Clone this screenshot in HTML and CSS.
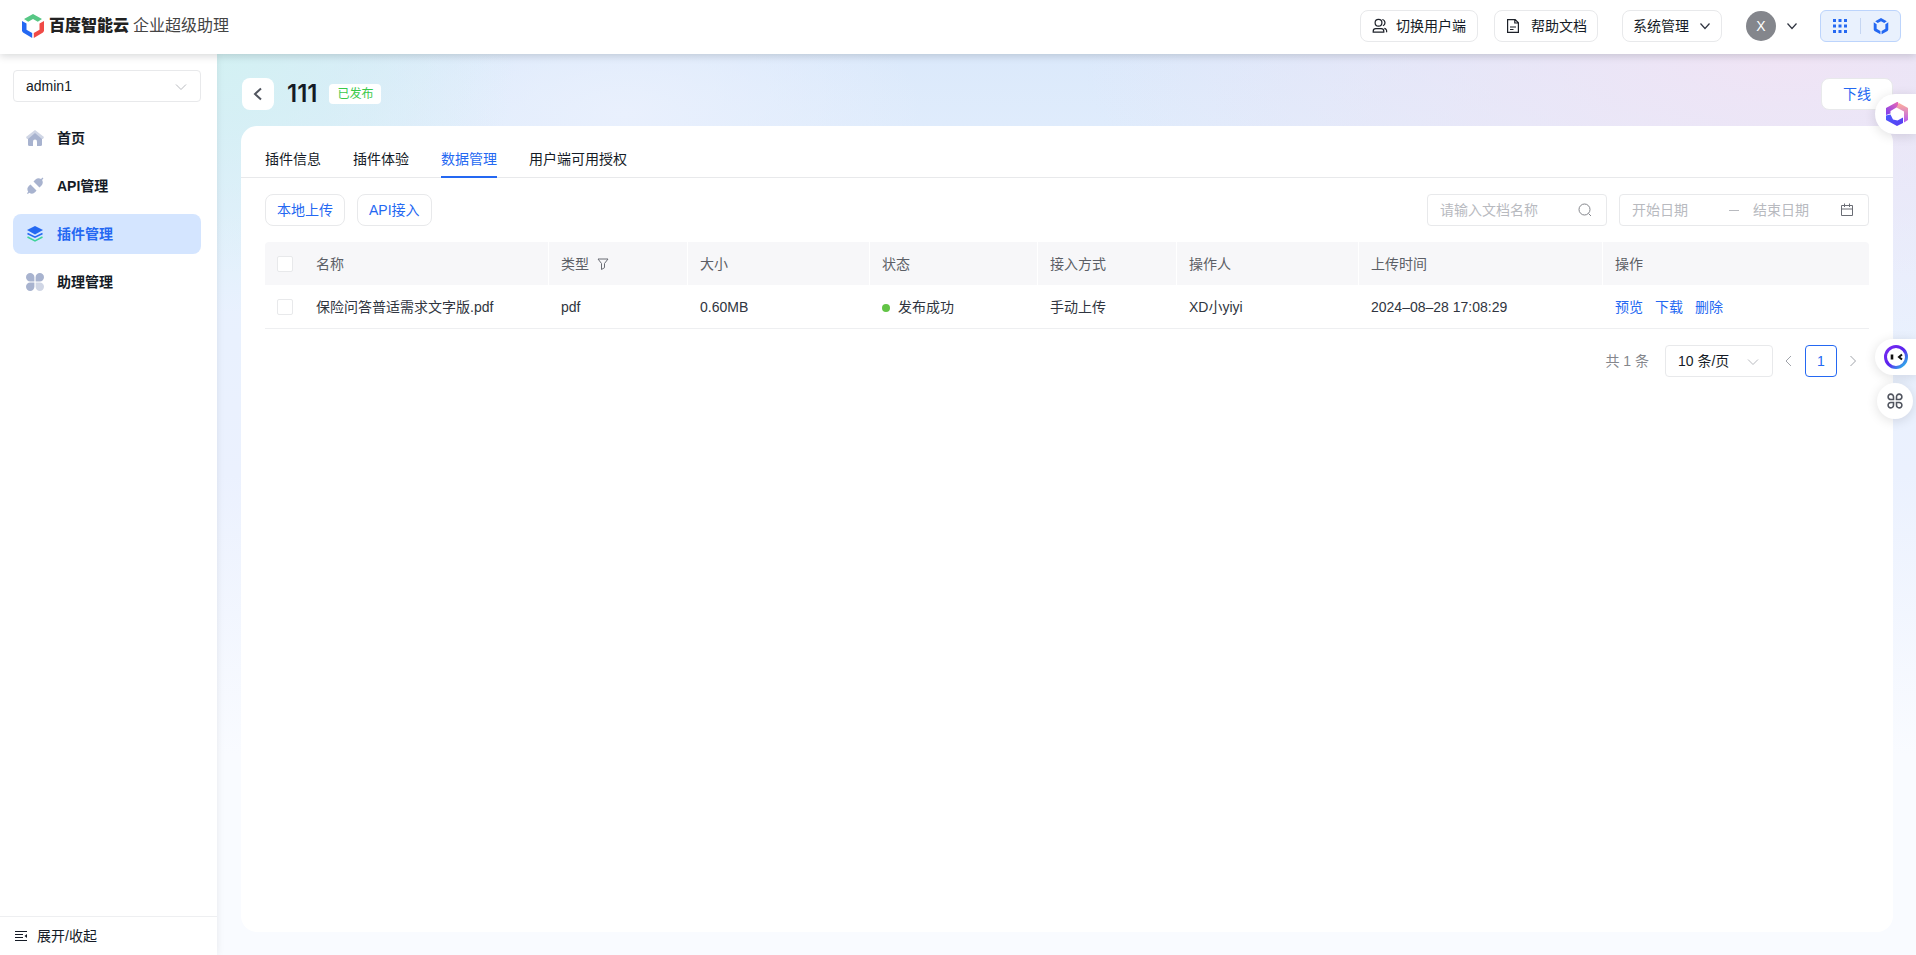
FILE: index.html
```html
<!DOCTYPE html>
<html lang="zh-CN">
<head>
<meta charset="utf-8">
<title>企业超级助理</title>
<link rel="stylesheet" href="styles.css">
</head>
<body>
<div class="app">
  <header class="topbar">
    <a class="brand" href="#">
      <svg class="brand-logo" width="22" height="24" viewBox="0 0 22 24" aria-hidden="true">
        <path fill="#57c785" d="M11 0 20 5 15.800 7.800 11 5 6.200 7.800 2 5z"/>
        <path fill="#2468f2" d="M0 7l4.500 2.600v6.200L10.200 19v5L1 18.600 0 17z"/>
        <path fill="#f04a47" d="M22 7l-4.500 2.600v6.200L11.800 19v5L21 18.600l1-1.600z"/>
      </svg>
      <span class="brand-name">百度智能云</span>
      <span class="brand-product">企业超级助理</span>
    </a>
    <div class="top-actions">
      <button class="top-btn switch" type="button">
        <svg width="16" height="16" viewBox="0 0 16 16" fill="none" stroke="#1d2129" stroke-width="1.2" aria-hidden="true"><circle cx="6.500" cy="4.800" r="3.400"/><path d="M1.200 14.200v-1a2.600 2.600 0 0 1 2.600-2.600h5.400a2.600 2.600 0 0 1 2.600 2.600v1zM10.300 1.500a3.300 3.300 0 0 1 .6 6.300M12.300 10.300a3 3 0 0 1 2.200 4"/></svg>
        <span>切换用户端</span>
      </button>
      <button class="top-btn help" type="button">
        <svg width="16" height="16" viewBox="0 0 16 16" fill="none" stroke="#1d2129" stroke-width="1.200" aria-hidden="true"><path d="M2.600 1.600h7.600l3.200 3.200v9.600H2.600zM9.800 1.800v3.200h3.400M5 9h6M5 11.500h3.500"/></svg>
        <span>帮助文档</span>
      </button>
      <button class="top-btn system" type="button">
        <span>系统管理</span>
        <svg width="12" height="12" viewBox="0 0 12 12" fill="none" stroke="#303540" stroke-width="1.200" aria-hidden="true"><path d="M1.500 3.500 6 8.500l4.500-5"/></svg>
      </button>
      <button class="user" type="button" aria-label="用户">
        <span class="avatar">X</span>
        <svg width="12" height="12" viewBox="0 0 12 12" fill="none" stroke="#303540" stroke-width="1.200" aria-hidden="true"><path d="M1.500 3.500 6 8.500l4.500-5"/></svg>
      </button>
      <div class="apps">
        <button type="button" aria-label="应用">
          <svg width="16" height="16" viewBox="0 0 16 16" fill="#2468f2" aria-hidden="true"><path d="M1 1h3v3H1zM6.500 1h3v3h-3zM12 1h3v3h-3zM1 6.500h3v3H1zM6.500 6.500h3v3h-3zM12 6.500h3v3h-3zM1 12h3v3H1zM6.500 12h3v3h-3zM12 12h3v3h-3z"/></svg>
        </button>
        <span class="apps-line"></span>
        <button type="button" aria-label="云服务">
          <svg width="16" height="18" viewBox="0 0 22 24" fill="#2468f2" aria-hidden="true"><path d="M11 1 19 5.400 15.500 8 11 5.400 6.500 8 3 5.400zM1 7l4 2.600v6.200L10.200 19v4.500L2 18.800 1 17zM21 7l-4 2.600v6.200L11.800 19v4.500L20 18.800l1-1.800z"/></svg>
        </button>
      </div>
    </div>
  </header>

  <div class="body">
    <aside class="sidebar">
      <div class="select-wrap account">
        <select aria-label="账号"><option>admin1</option></select>
        <svg class="caret" width="12" height="12" viewBox="0 0 12 12" fill="none" stroke="#b8babf" aria-hidden="true"><path d="M1 3.500 6 8.500l5-5"/></svg>
      </div>
      <nav class="menu">
        <a href="#"><svg width="18" height="18" viewBox="0 0 18 18" aria-hidden="true"><path fill="#d0d6e5" d="M9 1l9 7-1 2H1L0 8z"/><path fill="#a8b3cf" d="M9 4l7 6v5.500a1.500 1.500 0 0 1-1.500 1.500h-11A1.500 1.500 0 0 1 2 15.500V10z"/><path fill="#fff" d="M7 17v-4.500a2 2 0 0 1 4 0V17z"/></svg><span>首页</span></a>
        <a href="#"><svg width="18" height="18" viewBox="0 0 18 18" fill="#a8b3cf" aria-hidden="true"><path d="M4.500 7.500l6 6-1.200 1.500a4.800 4.800 0 0 1-6 .8L1.800 17l-.8-.8 1.200-1.500a4.800 4.800 0 0 1 .8-6z"/><path d="M7.500 4.500 9.500 2.500a4.800 4.800 0 0 1 5.500-.6L16.600.6l.8.8-1.300 1.600a4.800 4.800 0 0 1-.6 5.500l-2 2z"/></svg><span>API管理</span></a>
        <a class="active" href="#" aria-current="page"><svg width="18" height="18" viewBox="0 0 18 18" fill="none" aria-hidden="true"><path fill="#2468f2" d="M9 1l8 4-8 4.500L1 5z"/><path stroke="#2468f2" stroke-width="1.500" d="M1.500 8.500 9 12.200l7.500-3.700"/><path stroke="#3ed49a" stroke-width="1.500" d="M1.500 12 9 15.800l7.500-3.800"/></svg><span>插件管理</span></a>
        <a href="#"><svg width="18" height="18" viewBox="0 0 18 18" fill="#a8b3cf" aria-hidden="true"><path d="M4.200 0A4.200 4.200 0 0 1 8.400 4.200v4.200H4.200A4.200 4.200 0 0 1 4.200 0zM13.800 0a4.200 4.200 0 0 1 0 8.400H9.600V4.200A4.200 4.200 0 0 1 13.800 0zM4.200 18a4.200 4.200 0 0 1 0-8.400h4.200v4.200A4.200 4.200 0 0 1 4.200 18z"/><path fill="#d0d6e5" d="M13.800 18a4.200 4.200 0 0 1-4.200-4.200V9.600h4.200a4.200 4.200 0 0 1 0 8.400z"/></svg><span>助理管理</span></a>
      </nav>
      <button class="collapse" type="button">
        <svg width="12" height="12" viewBox="0 0 12 12" aria-hidden="true"><path stroke="#151b26" stroke-width="1.200" d="M0 1.500h12M0 4.500h8M0 7.500h8M0 10.500h12"/><path fill="#151b26" d="M12 4v4L9.500 6z"/></svg>
        <span>展开/收起</span>
      </button>
    </aside>

    <main class="main">
      <div class="page-head">
        <button class="back" type="button" aria-label="返回"><svg width="16" height="16" viewBox="0 0 16 16" fill="none" stroke="#51555f" stroke-width="2" aria-hidden="true"><path d="M11 2.500 5 8l6 5.500"/></svg></button>
        <h1>111</h1>
        <span class="tag">已发布</span>
        <button class="offline" type="button">下线</button>
      </div>

      <section class="card">
        <nav class="tabs">
          <a href="#">插件信息</a>
          <a href="#">插件体验</a>
          <a class="active" href="#" aria-current="page">数据管理</a>
          <a href="#">用户端可用授权</a>
        </nav>
        <div class="content">
          <div class="toolbar">
            <button class="line-btn" type="button">本地上传</button>
            <button class="line-btn" type="button">API接入</button>
            <label class="field search">
              <input type="text" placeholder="请输入文档名称" aria-label="请输入文档名称">
              <svg width="14" height="14" viewBox="0 0 14 14" fill="none" stroke="#84868c" aria-hidden="true"><circle cx="6.500" cy="6.500" r="5.500"/><path d="M10.500 10.500 13 13"/></svg>
            </label>
            <div class="field range">
              <input type="text" placeholder="开始日期" aria-label="开始日期">
              <span class="dash"></span>
              <input type="text" placeholder="结束日期" aria-label="结束日期">
              <svg width="14" height="14" viewBox="0 0 14 14" fill="none" stroke="#6a6d75" aria-hidden="true"><path d="M1.500 2.500h11v10h-11zM1.500 6h11M4.500.5v3.500M9.500.5v3.500"/></svg>
            </div>
          </div>

          <table class="grid">
            <colgroup><col class="c-check"><col class="c-name"><col class="c-type"><col class="c-size"><col class="c-state"><col class="c-type"><col class="c-size"><col class="c-time"><col></colgroup>
            <thead>
              <tr>
                <th class="check"><input type="checkbox" aria-label="全选"></th>
                <th>名称</th>
                <th>类型<svg class="filter" width="12" height="12" viewBox="0 0 12 12" fill="none" stroke="#6a6d75" aria-hidden="true"><path d="M1 1h10L7.500 5.500v4.200l-3 1.800v-6z"/></svg></th>
                <th>大小</th><th>状态</th><th>接入方式</th><th>操作人</th><th>上传时间</th><th>操作</th>
              </tr>
            </thead>
            <tbody>
              <tr>
                <td class="check"><input type="checkbox" aria-label="选择 保险问答普适需求文字版.pdf"></td>
                <td>保险问答普适需求文字版.pdf</td>
                <td>pdf</td>
                <td>0.60MB</td>
                <td><span class="dot"></span>发布成功</td>
                <td>手动上传</td>
                <td>XD小yiyi</td>
                <td>2024–08–28 17:08:29</td>
                <td><div class="ops"><a href="#">预览</a><a href="#">下载</a><a href="#">删除</a></div></td>
              </tr>
            </tbody>
          </table>

          <div class="pager">
            <span class="total">共 1 条</span>
            <div class="select-wrap size">
              <select aria-label="每页条数"><option>10 条/页</option></select>
              <svg class="caret" width="12" height="12" viewBox="0 0 12 12" fill="none" stroke="#b8babf" aria-hidden="true"><path d="M1 3.500 6 8.500l5-5"/></svg>
            </div>
            <button class="arrow" type="button" aria-label="上一页"><svg width="12" height="12" viewBox="0 0 12 12" fill="none" stroke="#a0a3aa" aria-hidden="true"><path d="M8 1 3 6l5 5"/></svg></button>
            <button class="page" type="button" aria-current="page">1</button>
            <button class="arrow" type="button" aria-label="下一页"><svg width="12" height="12" viewBox="0 0 12 12" fill="none" stroke="#a0a3aa" aria-hidden="true"><path d="M3.500 1l5 5-5 5"/></svg></button>
          </div>
        </div>
      </section>
    </main>
  </div>

  <button class="float float-cloud" type="button" aria-label="智能云">
    <svg width="22" height="24" viewBox="0 0 22 24" aria-hidden="true">
      <defs>
        <linearGradient id="g1" x1="0" y1="1" x2="1" y2="0"><stop offset="0" stop-color="#7a3cf0"/><stop offset="1" stop-color="#f06bb0"/></linearGradient>
        <linearGradient id="g2" x1="0" y1="0" x2="0" y2="1"><stop offset="0" stop-color="#ffb09a"/><stop offset="1" stop-color="#b65cf0"/></linearGradient>
        <linearGradient id="g3" x1="0" y1="0" x2="1" y2="1"><stop offset="0" stop-color="#4a5cff"/><stop offset="1" stop-color="#5a3cf0"/></linearGradient>
      </defs>
      <path fill="url(#g1)" d="M11 0 0 6v7l4.500-1.500V9L13 4l-1-4z"/>
      <path fill="url(#g2)" d="M13 1l9 5v12l-4 2.500V9.500L10.500 5.500z"/>
      <path fill="url(#g3)" d="M0 13.500 4.500 12.500 7 17.500l4.500 1 5.500-3v5.500L11 24 0 18z"/>
    </svg>
  </button>
  <button class="float float-bot" type="button" aria-label="智能客服">
    <svg width="24" height="24" viewBox="0 0 24 24" aria-hidden="true">
      <defs><linearGradient id="g4" x1="0" y1="0" x2="1" y2="1"><stop offset="0" stop-color="#7a2cf0"/><stop offset=".5" stop-color="#5a22ee"/><stop offset="1" stop-color="#25c8e8"/></linearGradient></defs>
      <circle cx="12" cy="12" r="10.500" fill="none" stroke="url(#g4)" stroke-width="3"/>
      <path fill="none" stroke="#111" stroke-width="2.600" d="M8 9.500v5"/><path fill="none" stroke="#111" stroke-width="2" d="M18 9.500 15 12l3 2.500"/>
    </svg>
  </button>
  <button class="float float-more" type="button" aria-label="更多">
    <svg width="16" height="16" viewBox="0 0 16 16" fill="none" stroke="#51555f" stroke-width="1.600" aria-hidden="true"><path d="M6.500 6.500H4A2.700 2.700 0 1 1 6.500 4zM9.500 6.500V4A2.700 2.700 0 1 1 12 6.500zM6.500 9.500V12A2.700 2.700 0 1 1 4 9.500zM9.500 9.500H12A2.700 2.700 0 1 1 9.500 12z"/></svg>
  </button>
</div>
</body>
</html>
```
FILE: styles.css
```css
* { box-sizing: border-box; }
body {
  margin: 0;
  color: #151b26;
  font: 14px/20px "Liberation Sans", "Noto Sans CJK SC", sans-serif;
}
a { color: inherit; text-decoration: none; }
button, input, select { font: inherit; color: inherit; }
button { padding: 0; border: 0; background: none; cursor: pointer; }
svg { display: block; flex: none; }

.app { position: relative; display: flex; flex-direction: column; height: 100vh; overflow: hidden; }

.topbar {
  position: relative;
  z-index: 2;
  display: flex;
  align-items: center;
  justify-content: space-between;
  height: 54px;
  padding: 0 15px 2px 22px;
  background: #fff;
  box-shadow: 0 2px 8px rgba(7, 12, 20, .16);
}
.brand { display: flex; align-items: center; }
.brand-name { margin-left: 5px; font-size: 16px; font-weight: 900; color: #222; }
.brand-product { margin-left: 4px; font-size: 16px; color: #444; }
.top-actions { display: flex; align-items: center; }
.top-btn {
  display: flex;
  align-items: center;
  gap: 8px;
  height: 32px;
  padding: 0 11px;
  border: 1px solid #e8e9eb;
  border-radius: 8px;
}
.help { margin-left: 16px; padding: 0 10px; gap: 10px; }
.system { margin-left: 24px; padding: 0 10px; gap: 10px; }
.user { display: flex; align-items: center; gap: 10px; margin: 0 22px 0 24px; }
.avatar {
  width: 30px;
  height: 30px;
  border-radius: 50%;
  background: #84868c;
  color: #fff;
  line-height: 30px;
  text-align: center;
}
.apps {
  display: flex;
  align-items: center;
  gap: 12px;
  height: 32px;
  padding: 0 11px;
  border: 1px solid #bcd4fc;
  border-radius: 6px;
  background: #e9f1fd;
}
.apps-line { width: 1px; height: 16px; background: #c5d6f2; }

.body { display: flex; flex: 1; min-height: 0; }
.sidebar {
  z-index: 1;
  display: flex;
  flex-direction: column;
  flex: none;
  width: 217px;
  background: #fff;
  box-shadow: 0 0 8px rgba(7, 12, 20, .08);
}
.select-wrap { position: relative; display: flex; height: 32px; }
.select-wrap select {
  width: 100%;
  padding: 0 28px 0 12px;
  border: 1px solid #e8e9eb;
  border-radius: 4px;
  background: #fff;
  appearance: none;
}
.caret { position: absolute; top: 11px; right: 14px; pointer-events: none; }
.account { margin: 16px 16px 0 13px; }
.menu { display: flex; flex: 1; flex-direction: column; gap: 8px; margin: 16px 16px 0 13px; }
.menu a {
  display: flex;
  align-items: center;
  gap: 13px;
  height: 40px;
  padding: 0 13px;
  border-radius: 8px;
  font-weight: 600;
}
.menu .active { background: #d4e5ff; color: #2468f2; }
.collapse {
  display: flex;
  align-items: center;
  gap: 10px;
  height: 39px;
  padding: 0 15px;
  border-top: 1px solid #eeeff1;
}

.main {
  display: flex;
  flex: 1;
  flex-direction: column;
  min-width: 0;
  padding: 24px 23px 23px 24px;
  background:
    radial-gradient(ellipse 300px 260px at 0 0, #d3f1f3, rgba(211, 241, 243, 0)),
    radial-gradient(ellipse 300px 140px at 24% 60px, #e9f0fd, rgba(233, 240, 253, 0)),
    radial-gradient(ellipse 700px 300px at 92% 0, #f0e4f5, rgba(240, 228, 245, 0)),
    linear-gradient(180deg, #dbe9fb 0, #e8f1fe 220px, #ebf1fe 420px, #f9fbff 700px);
}
.page-head { display: flex; align-items: center; height: 32px; margin-bottom: 16px; }
.back {
  display: flex;
  align-items: center;
  justify-content: center;
  width: 32px;
  height: 32px;
  margin-left: 1px;
  border-radius: 8px;
  background: #fff;
}
h1 { margin: 0 12px 0 13px; font: 600 24px/32px Inter, "Noto Sans CJK SC", sans-serif; }
.tag { padding: 0 8px; border-radius: 4px; background: #fff; color: #39c94a; font-size: 12px; }
.offline {
  width: 72px;
  height: 32px;
  margin-left: auto;
  border: 1px solid #e8e9eb;
  border-radius: 8px;
  background: #fff;
  color: #2468f2;
}

.card { flex: 1; border-radius: 16px; background: #fff; }
.tabs { display: flex; gap: 32px; height: 52px; padding: 14px 24px 0; border-bottom: 1px solid #e8e9eb; }
.tabs a { padding-top: 9px; height: 38px; }
.tabs .active { border-bottom: 2px solid #2468f2; color: #2468f2; }
.content { padding: 16px 24px; }
.toolbar { display: flex; gap: 12px; margin-bottom: 16px; }
.line-btn { height: 32px; padding: 0 11px; border: 1px solid #e8e9eb; border-radius: 8px; color: #2468f2; }
.field {
  display: flex;
  align-items: center;
  height: 32px;
  padding: 0 14px 0 12px;
  border: 1px solid #e8e9eb;
  border-radius: 4px;
}
.field input { flex: 1; width: 0; min-width: 0; padding: 0; border: 0; outline: 0; background: none; }
.field input::placeholder { color: #b8babf; opacity: 1; }
.search { width: 180px; margin-left: auto; }
.range { width: 250px; }
.dash { width: 10px; height: 1px; margin: 0 14px 0 10px; background: #b8babf; }

.grid { width: 100%; border-spacing: 0; table-layout: fixed; }
.c-check { width: 39px; }
.c-name { width: 245px; }
.c-type { width: 139px; }
.c-size { width: 182px; }
.c-state { width: 168px; }
.c-time { width: 244px; }
.grid th, .grid td { height: 43px; padding: 0 12px; text-align: left; font-weight: 400; white-space: nowrap; }
.grid th { border-right: 1px solid #fff; background: #f7f7f9; color: #5c5f66; }
.grid th.check { border-right: 0; border-radius: 4px 0 0 0; }
.grid th:last-child { border-right: 0; border-radius: 0 4px 0 0; }
.grid td { height: 44px; border-bottom: 1px solid #eeeff1; color: #303540; }
.grid .check { padding: 0 11px 0 12px; }
.grid input {
  display: block;
  width: 16px;
  height: 16px;
  margin: 0;
  border: 1px solid #e8e9eb;
  border-radius: 2px;
  background: #fff;
  appearance: none;
}
.filter { display: inline-block; margin-left: 8px; vertical-align: -1px; }
.dot { display: inline-block; width: 8px; height: 8px; margin-right: 8px; border-radius: 50%; background: #62c446; }
.ops { display: flex; gap: 12px; color: #2468f2; }

.pager { display: flex; align-items: center; justify-content: flex-end; margin-top: 16px; }
.total { color: #84868c; }
.size { width: 108px; margin-left: 16px; }
.arrow { display: flex; align-items: center; justify-content: center; width: 32px; height: 32px; }
.page { width: 32px; height: 32px; border: 1px solid #2468f2; border-radius: 4px; color: #2468f2; }

.float {
  position: absolute;
  z-index: 3;
  display: flex;
  align-items: center;
  background: #fff;
  box-shadow: 0 2px 12px rgba(7, 12, 20, .12);
}
.float-cloud { top: 94px; right: 0; width: 41px; height: 40px; padding-left: 11px; border-radius: 20px 0 0 20px; }
.float-bot { top: 339px; right: 0; width: 41px; height: 36px; padding-left: 9px; border-radius: 18px 0 0 18px; }
.float-more { top: 383px; right: 3px; width: 36px; height: 36px; justify-content: center; border-radius: 50%; }
```
